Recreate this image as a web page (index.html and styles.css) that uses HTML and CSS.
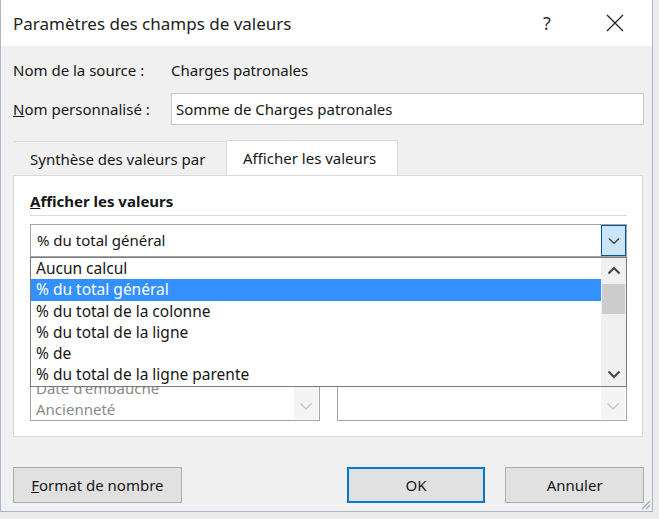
FILE: index.html
```html
<!DOCTYPE html>
<html lang="fr">
<head>
    <meta charset="UTF-8">
    <title>Paramètres des champs de valeurs</title>
    <link rel="stylesheet" href="styles.css">
</head>
<body>
    <div class="dialog">
        <!-- Title bar -->
        <div class="titlebar">
            <span class="title">Paramètres des champs de valeurs</span>
            <span class="help">?</span>
            <span class="close">
                <svg width="18" height="18" viewBox="0 0 18 18"><path d="M1 1L17 17M17 1L1 17" stroke="#222" stroke-width="1.3" fill="none"/></svg>
            </span>
        </div>

        <div class="content">
            <div class="row">
                <span class="label">Nom de la source :</span>
                <span>Charges patronales</span>
            </div>
            <div class="row row-input">
                <span class="label"><u>N</u>om personnalisé :</span>
                <div class="textbox">Somme de Charges patronales</div>
            </div>

            <!-- Tabs -->
            <div class="tabs">
                <div class="tab">Synthèse des valeurs par</div>
                <div class="tab active">Afficher les valeurs</div>
            </div>
            <div class="panel">
                <div class="heading"><u>A</u>fficher les valeurs</div>
                <div class="separator"></div>

                <div class="combo">
                    <div class="combo-value">% du total général</div>
                    <div class="combo-btn">
                        <svg width="12" height="8" viewBox="0 0 12 8"><path d="M1 1.5L6 6.5L11 1.5" stroke="#333" stroke-width="1.2" fill="none"/></svg>
                    </div>

                    <!-- Opened dropdown -->
                    <div class="dropdown">
                        <div class="options">
                            <div class="option">Aucun calcul</div>
                            <div class="option selected">% du total général</div>
                            <div class="option">% du total de la colonne</div>
                            <div class="option">% du total de la ligne</div>
                            <div class="option">% de</div>
                            <div class="option">% du total de la ligne parente</div>
                        </div>
                        <div class="scrollbar">
                            <div class="arrow">
                                <svg width="14" height="9" viewBox="0 0 14 9"><path d="M1.5 7.5L7 2L12.5 7.5" stroke="#444" stroke-width="2" fill="none"/></svg>
                            </div>
                            <div class="thumb"></div>
                            <div class="track"></div>
                            <div class="arrow">
                                <svg width="14" height="9" viewBox="0 0 14 9"><path d="M1.5 1.5L7 7L12.5 1.5" stroke="#444" stroke-width="2" fill="none"/></svg>
                            </div>
                        </div>
                    </div>
                </div>

                <div class="base-row">
                    <div class="base-box">
                        <div class="base-items">
                            <div>Date d'embauche</div>
                            <div>Ancienneté</div>
                        </div>
                        <div class="base-arrow">
                            <svg width="14" height="9" viewBox="0 0 14 9"><path d="M1.5 1.5L7 7L12.5 1.5" stroke="#c4c4c4" stroke-width="1.4" fill="none"/></svg>
                        </div>
                    </div>
                    <div class="base-box">
                        <div class="base-items"></div>
                        <div class="base-arrow">
                            <svg width="14" height="9" viewBox="0 0 14 9"><path d="M1.5 1.5L7 7L12.5 1.5" stroke="#c4c4c4" stroke-width="1.4" fill="none"/></svg>
                        </div>
                    </div>
                </div>
            </div>

            <!-- Buttons -->
            <div class="buttons">
                <button class="btn btn-format"><u>F</u>ormat de nombre</button>
                <button class="btn btn-ok">OK</button>
                <button class="btn">Annuler</button>
            </div>
        </div>
        <div class="grip">
            <svg width="11" height="11" viewBox="0 0 11 11"><path d="M10 2L2 10M10 6L6 10" stroke="#a8a8a8" stroke-width="1.2" fill="none"/></svg>
        </div>
    </div>
</body>
</html>
```

FILE: styles.css
```css
body {
    margin: 0;
    background-color: #ececec;
    font-family: "Noto Sans", "Open Sans", sans-serif;
    font-size: 15px;
    color: #161616;
}
.dialog {
    position: relative;
    width: 651px;
    height: 511px;
    background-color: #f0f0f0;
    border: 1px solid #aab5d2;
    border-top: none;
}
.titlebar {
    height: 46px;
    background: #fff;
    display: flex;
    align-items: center;
    padding-left: 12px;
}
.title {
    flex: 1;
    font-size: 17px;
    color: #222;
}
.help {
    width: 46px;
    text-align: center;
    font-size: 18px;
    color: #333;
}
.close {
    width: 46px;
    margin-left: 22px;
    margin-right: 14px;
    display: flex;
    justify-content: center;
}
.content {
    padding: 0 8px 0 12px;
}
.row {
    display: flex;
    align-items: center;
    height: 24px;
    margin-top: 12px;
}
.label {
    width: 158px;
}
.row-input {
    height: 32px;
    margin-top: 11px;
}
.textbox {
    width: 467px;
    height: 30px;
    line-height: 30px;
    border: 1px solid #c8c8c8;
    background: #fff;
    padding-left: 4px;
}
.tabs {
    display: flex;
    margin-top: 16px;
    height: 34px;
    padding-left: 1px;
}
.tab {
    width: 212px;
    padding-left: 16px;
    line-height: 34px;
    border-top: 1px solid #dadada;
    box-sizing: border-box;
}
.tab.active {
    width: 172px;
    padding-left: 16px;
    background: #fff;
    border: 1px solid #d9d9d9;
    border-bottom: none;
    margin-top: -1px;
    height: 35px;
    position: relative;
    z-index: 1;
}
.panel {
    width: 630px;
    height: 262px;
    box-sizing: border-box;
    background: #fff;
    border: 1px solid #d9d9d9;
    padding: 0 15px 0 16px;
}
.heading {
    font-weight: bold;
    line-height: 22px;
    margin-top: 14px;
}
.separator {
    height: 1px;
    background: #dcdcdc;
    margin: 3px 0 8px;
}
.combo {
    position: relative;
    height: 33px;
    border: 1px solid #a5a5a5;
    box-sizing: border-box;
    display: flex;
}
.combo-value {
    flex: 1;
    line-height: 31px;
    padding-left: 6px;
}
.combo-btn {
    width: 25px;
    height: 31px;
    box-sizing: border-box;
    background: #cce4f7;
    border: 1px solid #005499;
    display: flex;
    align-items: center;
    justify-content: center;
}
.dropdown {
    position: absolute;
    top: 32px;
    left: -1px;
    right: -1px;
    height: 130px;
    box-sizing: border-box;
    background: #fff;
    border: 1px solid #7a7a7a;
    display: flex;
    z-index: 2;
}
.options {
    flex: 1;
}
.option {
    height: 21.3px;
    line-height: 21px;
    padding-left: 5px;
    font-size: 15.5px;
}
.option.selected {
    background: #3390ff;
    color: #fff;
}
.scrollbar {
    width: 25px;
    background: #f0f0f0;
    display: flex;
    flex-direction: column;
}
.arrow {
    height: 24px;
    display: flex;
    align-items: center;
    justify-content: center;
}
.thumb {
    height: 30px;
    margin: 2px 1px 0;
    background: #cdcdcd;
}
.track {
    flex: 1;
}
.base-row {
    display: flex;
    justify-content: space-between;
    margin-top: 20px;
}
.base-box {
    width: 290px;
    height: 144px;
    box-sizing: border-box;
    border: 1px solid #a5a5a5;
    display: flex;
}
.base-items {
    flex: 1;
    display: flex;
    flex-direction: column;
    justify-content: flex-end;
    padding-left: 5px;
    color: #8a8a8a;
    line-height: 21px;
}
.base-arrow {
    width: 24px;
    margin: 1px;
    background: #f4f4f4;
    display: flex;
    align-items: flex-end;
    justify-content: center;
    padding-bottom: 8px;
}
.buttons {
    display: flex;
    margin-top: 30px;
}
.btn {
    font-family: inherit;
    font-size: 15px;
    color: #161616;
    height: 36px;
    width: 139px;
    background: #e1e1e1;
    border: 1px solid #adadad;
    margin-left: 20px;
}
.btn-format {
    width: 169px;
    margin-left: 0;
    margin-right: 145px;
}
.btn-ok {
    border: 2px solid #0078d7;
}
.grip {
    position: absolute;
    right: 1px;
    bottom: 1px;
    line-height: 0;
}
```
